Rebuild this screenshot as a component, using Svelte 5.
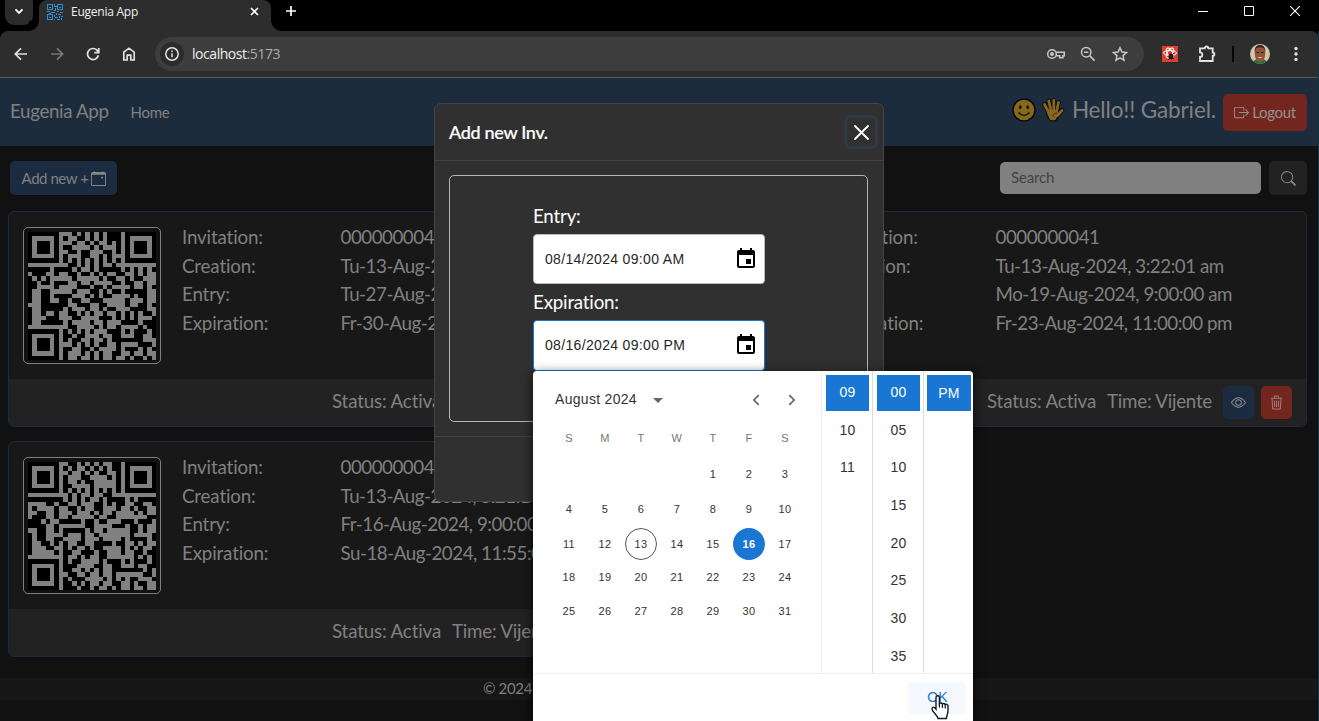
<script>
  const qrA = [
    '.......###.#.#.#.#...#.......', '.#####.#.##..#.#.#...#.#####.', '.#...#.###.##.#.##.#.#.#...#.', '.#...#.#..####.#.###.#.#...#.',
    '.#...#.##..#..###..#.#.#...#.', '.#####.#.###..##.#.###.#####.', '.......#.#.#.#.#.#.#.#.......', '#########..#.#.#.##.#########',
    '.....#....#.##.#.....#.#.#.#.', '#...##.##..#..#.#.##..##.#.##', '.#.#.#####.#####.#..##.#..###', '..#..#...##.##.####..#..##.##',
    '..####.####...#..#.####.##.#.', '.##..#####.###..#.#..#.....##', '.##..#....###.#.#..####.#..##', '.##..##..#..##...#####.###.##',
    '###......##...##..####.##..#.', '.##.....#.###.##.#..###....##', '.##.##.##..#.#.##.##.#.#.#..#', '.###...###..####...#.#.#.###.',
    '.##.....#.####.##.###....#...', '#########..####.#.##.####.#..', '.......#.#.#.#.###...#.#...#.', '.#####.#..#..###.##..###..##.',
    '.#...#.#.#..##.##.#.......###', '.#...#.###.#.#.#..##.####...#', '.#...#.#..##..#.####.#...#.#.', '.#####.#.###.#.#.##..##.##.##', '.......#.##.##.#.##.##.#..#.#'
  ];
  const qrB = [
    '.......##..#.#.#.##..#.......', '.#####.#.#.##.#.#.#..#.#####.', '.#...#.##.##.#.#..##.#.#...#.', '.#...#.#.###..####.#.#.#...#.',
    '.#...#.#.##.#..#####.#.#...#.', '.#####.#..####.#####.#.#####.', '.......#.#.#.#.#.#.#.#.......', '#########.#.##.##..##########',
    '........#.#.#.##.#....#.#....', '####..#..##.###..#.#..##..##.', '#.####.##..#.##..###.##.#..##', '##..##.###.###.#.##.####.#.##',
    '#...##.##.#####.##..#######..', '...#.##.....#..#..###...#...#', '....##.######..####...#..#.##', '##..##.#.....#.##.#####..#.##',
    '.#..####.###.##.#######.####.', '.#..##..####.###.####.#....#.', '.##..#.#.##..##....#..##.#.##', '.###..##.#.##.#..####.#.#.##.',
    '.#####.#..##...#..###.##..#..', '########.##.#.##..######.#.#.', '.......#.#..####.#...#.#...#.', '.#####.#...####..##..###.##..',
    '.#...#.#..##.#.#.##.......#.#', '.#...#.##..##.##.##.######..#', '.#...#.#.#...####.#.#.#..###.', '.#####.#..#.#.##.##..##.#..##', '.......#...#..#.##.#.##.##.##'
  ];
  const path = (rows) => rows.map((r, y) => [...r].map((c, x) => (c === '#' ? `M${x} ${y}h1v1h-1z` : '')).join('')).join('');
  const cards = [
    { qr: path(qrA), v: ['0000000042', 'Tu-13-Aug-2024, 3:22:40 am', 'Tu-27-Aug-2024, 9:00:00 am', 'Fr-30-Aug-2024, 11:00:00 pm'] },
    { qr: path(qrB), v: ['0000000041', 'Tu-13-Aug-2024, 3:22:01 am', 'Mo-19-Aug-2024, 9:00:00 am', 'Fr-23-Aug-2024, 11:00:00 pm'] },
    { qr: path(qrB), v: ['0000000040', 'Tu-13-Aug-2024, 3:21:10 am', 'Fr-16-Aug-2024, 9:00:00 am', 'Su-18-Aug-2024, 11:55:00 pm'] }
  ];
  const labels = ['Invitation:', 'Creation:', 'Entry:', 'Expiration:'];
  const weeks = [0, 1, 2, 3, 4].map((w) => [0, 1, 2, 3, 4, 5, 6].map((d) => w * 7 + d - 3));
  const hours = ['09', '10', '11'];
  const minutes = ['00', '05', '10', '15', '20', '25', '30', '35'];
</script>

{#snippet calIcon()}
  <svg class="cal" viewBox="0 0 24 24" width="24" height="24"><path d="M17 12h-5v5h5v-5zM16 1v2H8V1H6v2H5c-1.11 0-1.99.9-1.99 2L3 19c0 1.1.89 2 2 2h14c1.1 0 2-.9 2-2V5c0-1.1-.9-2-2-2h-1V1h-2zm3 18H5V8h14v11z" fill="#000" /></svg>
{/snippet}

<div class="page">
  <div class="tabs">
    <div class="chev"><svg width="10" height="7" viewBox="0 0 10 7"><path d="M1.5 1.3 5 4.8 8.5 1.3" fill="none" stroke="#fff" stroke-width="1.9" /></svg></div>
    <div class="tab">
      <svg width="16" height="16" viewBox="0 0 16 16" fill="none" stroke="#2f8fd6" shape-rendering="crispEdges"><path d="M.5.5h5v5h-5zM10.500.5h5v5h-5zM.5 10.500h5v5h-5z" /><path d="M2 3h2M12 3h2M2 13h2M7.500 0v3M8 2.500h2M8.500 4v3M0 7.500h3M4 8.500h4M2 9.500h2M10 7.500h2M13 8.500h3M9.500 9v2M11 10.500h3M7.500 11v2M8 13.500h3M12.500 12v2M14 12.500h2M10 15.500h3M14.500 14v2M7 15.500h1M7 6.500h1" /></svg>
      <span>Eugenia App</span>
      <svg class="tabx" width="9" height="9" viewBox="0 0 9 9"><path d="M1 1l7 7M8 1 1 8" stroke="#fff" stroke-width="1.6" /></svg>
    </div>
    <svg class="plus" width="12" height="12" viewBox="0 0 12 12"><path d="M6 1v10M1 6h10" stroke="#fff" stroke-width="1.7" /></svg>
    <div class="win">
      <svg width="10" height="10" viewBox="0 0 10 10"><path d="M0 5.5h10" stroke="#fff" /></svg>
      <svg width="10" height="10" viewBox="0 0 10 10"><path d="M.5.5h9v9h-9z" fill="none" stroke="#fff" /></svg>
      <svg width="10" height="10" viewBox="0 0 10 10"><path d="M0 0l10 10M10 0 0 10" stroke="#fff" stroke-width="1.1" /></svg>
    </div>
  </div>
  <div class="toolbar">
    <div class="nav">
      <svg width="16" height="16" viewBox="0 0 16 16"><path d="M14 8H2.5M8 2.3 2.3 8 8 13.7" /></svg>
      <svg class="dim" width="16" height="16" viewBox="0 0 16 16"><path d="M2 8h11.5M8 2.3 13.7 8 8 13.7" /></svg>
      <svg width="16" height="16" viewBox="0 0 16 16"><path d="M13.4 9.2A5.5 5.5 0 1 1 12 4.2L13.8 6M13.8 2v4.6H9.3" /></svg>
      <svg width="16" height="16" viewBox="0 0 16 16"><path d="M2.8 14V6.2L8 2.2l5.2 4V14H9.8V9.2H6.2V14z" /></svg>
    </div>
    <div class="url">
      <i><svg width="16" height="16" viewBox="0 0 16 16"><circle cx="8" cy="8" r="6.2" fill="none" stroke="#e3e3e3" stroke-width="1.5" /><path d="M8 7.2v4M8 4.4v1.6" stroke="#e3e3e3" stroke-width="1.5" /></svg></i>
      <span class="host">localhost<em>:5173</em></span>
      <div class="urlicons">
        <svg width="20" height="16" viewBox="0 0 20 16"><circle cx="6" cy="8" r="4.3" /><circle cx="6" cy="8" r="1.2" fill="#c7c7c7" /><path d="M10 6.3h8.3v3.5h-1.4v2h-3.2v-2H10" /></svg>
        <svg width="16" height="16" viewBox="0 0 16 16"><circle cx="6.200" cy="6.200" r="4.700" /><path d="M4 6.200h4.400M9.600 9.600l5 5" /></svg>
        <svg width="16" height="16" viewBox="0 0 16 16"><path d="M8 1.800l1.900 4.300 4.600.4-3.500 3.100 1 4.600L8 11.800l-4 2.400 1-4.600L1.500 6.500l4.600-.4z" /></svg>
      </div>
    </div>
    <svg class="ext" width="16" height="16" viewBox="0 0 16 16"><path d="M0 0h16v16H0z" fill="#d9402f" /><g fill="none" stroke="#fff" stroke-width="1"><ellipse cx="8" cy="7" rx="6.500" ry="2.600" /><ellipse cx="8" cy="7" rx="2.600" ry="5.500" transform="rotate(30 8 7)" /><ellipse cx="8" cy="7" rx="2.600" ry="5.500" transform="rotate(-30 8 7)" /></g><ellipse cx="9" cy="10.500" rx="2.600" ry="3" fill="#351412" /><path d="M6 14l6-7M7 8l5 5" stroke="#351412" /></svg>
    <svg class="puz" width="20" height="20" viewBox="0 0 20 20"><path d="M3 4.300H7.700a1.800 1.800 0 0 1 3.600 0H15.700V8.500a1.700 1.700 0 0 1 0 3.400V17H3V13a2.300 2.300 0 0 0 0-4.600z" fill="none" stroke="#e3e3e3" stroke-width="1.800" /></svg>
    <div class="bar"></div>
    <svg class="ava" width="20" height="20" viewBox="0 0 20 20"><defs><clipPath id="avatar"><circle cx="10" cy="10" r="10" /></clipPath></defs><g clip-path="url(#avatar)"><path d="M0 0h20v20H0z" fill="#d3c4ab" /><path d="M2 20c1-4 4-5 8-5s7 1 8 5z" fill="#17713c" /><ellipse cx="10" cy="10" rx="5.200" ry="8.500" fill="#93523a" /><path d="M4.800 9C4 3 7 1 10 1s6 2 5.200 8L14 4.500Q10 2 6 4.500z" fill="#31201a" /><path d="M6.500 8.500h2.500m2 0h2.500" stroke="#2b1813" stroke-width="1.200" /><path d="M7.500 13q2.500 2 5 0z" fill="#f4dcc8" /></g></svg>
    <svg class="dots" width="4" height="16" viewBox="0 0 4 16" fill="#e3e3e3"><circle cx="2" cy="2.500" r="1.700" /><circle cx="2" cy="8" r="1.700" /><circle cx="2" cy="13.500" r="1.700" /></svg>
  </div>

  <header>
    <span class="brand">Eugenia App</span><span class="home">Home</span>
    <div class="hello">
      <svg width="24" height="24" viewBox="0 0 24 24"><circle cx="12" cy="12" r="11" fill="#86671b" stroke="#080a0c" stroke-width="1.500" /><ellipse cx="8.200" cy="9.300" rx="1.300" ry="2" fill="#17130a" /><ellipse cx="15.800" cy="9.300" rx="1.300" ry="2" fill="#17130a" /><path d="M6.500 14.500q5.500 6 11 0" fill="none" stroke="#17130a" stroke-width="1.500" /></svg>
      <svg width="24" height="24" viewBox="0 0 24 24"><g fill="none" stroke-linecap="round" stroke-linejoin="round"><path d="M3.500 6.500 7.500 14M7.800 3l2 9M12.800 2.500v9.500M17.500 4.500l-1.800 9M21 12.500l-4.500 5" stroke="#080a0c" stroke-width="4.600" /><path d="M7.300 13h8.500l.9 3.500-3 4.700h-3.600L7.300 16z" fill="#86671b" stroke="#080a0c" stroke-width="4.600" /><path d="M7.300 13h8.500l.9 3.500-3 4.700h-3.600L7.300 16z" fill="#86671b" stroke="#86671b" stroke-width="2" /><path d="M3.500 6.500 7.500 14M7.800 3l2 9M12.800 2.500v9.500M17.500 4.500l-1.800 9M21 12.500l-4.500 5" stroke="#86671b" stroke-width="2.800" /><path d="M12 18.500q0-3.500 4-3.500" stroke="#3d3012" /></g></svg>
      <span>Hello!! Gabriel.</span>
    </div>
    <button class="logout"><svg width="15" height="15" viewBox="0 0 16 16" fill="#929292"><path fill-rule="evenodd" d="M10 12.500a.5.5 0 0 1-.5.5h-8a.5.5 0 0 1-.5-.5v-9a.5.5 0 0 1 .5-.5h8a.5.5 0 0 1 .5.5v2a.5.5 0 0 0 1 0v-2A1.500 1.500 0 0 0 9.500 2h-8A1.500 1.500 0 0 0 0 3.500v9A1.500 1.500 0 0 0 1.500 14h8a1.500 1.500 0 0 0 1.500-1.500v-2a.5.5 0 0 0-1 0z" /><path d="M15.854 8.354a.5.5 0 0 0 0-.708l-3-3a.5.5 0 0 0-.708.708L14.293 7.500H5.500a.5.5 0 0 0 0 1h8.793l-2.147 2.146a.5.5 0 0 0 .708.708z" /></svg><span>Logout</span></button>
  </header>

  <div class="actions">
    <button class="add"><span>Add new +</span><svg width="15" height="15" viewBox="0 0 16 16" fill="#858789"><path d="M11 6.500a.5.5 0 0 1 .5-.5h1a.5.5 0 0 1 .5.5v1a.5.5 0 0 1-.5.5h-1a.5.5 0 0 1-.5-.5z" /><path d="M3.500 0a.5.5 0 0 1 .5.5V1h8V.5a.5.5 0 0 1 1 0V1h1a2 2 0 0 1 2 2v11a2 2 0 0 1-2 2H2a2 2 0 0 1-2-2V3a2 2 0 0 1 2-2h1V.5a.5.5 0 0 1 .5-.5M1 4v10a1 1 0 0 0 1 1h12a1 1 0 0 0 1-1V4z" /></svg></button>
    <div class="search">Search</div>
    <button class="find"><svg width="15" height="15" viewBox="0 0 16 16" fill="#858585"><path d="M11.742 10.344a6.500 6.500 0 1 0-1.397 1.398l3.850 3.850a1 1 0 0 0 1.415-1.414zM12 6.500a5.500 5.500 0 1 1-11 0 5.500 5.500 0 0 1 11 0" /></svg></button>
  </div>

  <main>
    {#each cards as c}
      <article>
        <div class="body">
          <div class="qr"><svg width="128" height="128" viewBox="0 0 29 29"><path d="M0 0h29v29H0z" fill="#000" /><path d={c.qr} fill="#808080" shape-rendering="crispEdges" /></svg></div>
          <dl>{#each labels as l, i}<dt>{l}</dt><dd>{c.v[i]}</dd>{/each}</dl>
        </div>
        <div class="foot">
          <span>Status: Activa</span><span class="time">Time: Vijente</span>
          <button class="eye"><svg width="15" height="15" viewBox="0 0 16 16" fill="#8b8e91"><path d="M16 8s-3-5.500-8-5.500S0 8 0 8s3 5.500 8 5.500S16 8 16 8M1.173 8a13 13 0 0 1 1.660-2.043C4.120 4.668 5.880 3.500 8 3.500s3.879 1.168 5.168 2.457A13 13 0 0 1 14.828 8q-.086.130-.195.288c-.335.480-.830 1.120-1.465 1.755C11.879 11.332 10.119 12.500 8 12.500s-3.879-1.168-5.168-2.457A13 13 0 0 1 1.172 8z" /><path d="M8 5.500a2.500 2.500 0 1 0 0 5 2.500 2.500 0 0 0 0-5M4.500 8a3.500 3.500 0 1 1 7 0 3.500 3.500 0 0 1-7 0" /></svg></button>
          <button class="trash"><svg width="15" height="15" viewBox="0 0 16 16" fill="none" stroke="#a7827f"><path d="M2 3.500h12M6 3V1h4v2M3.200 4l.8 11h8l.8-11M5.700 6l.3 7M8 6v7M10.300 6l-.3 7" /></svg></button>
        </div>
      </article>
    {/each}
  </main>
  <footer>© 2024</footer>
  <div class="edge"></div>

  <section class="modal">
    <div class="mhead"><h5>Add new Inv.</h5><div class="close"><svg width="15" height="15" viewBox="0 0 15 15"><path d="M1 1l13 13M14 1 1 14" stroke="#fff" stroke-width="1.800" stroke-linecap="round" /></svg></div></div>
    <div class="mbody">
      <div class="field">
        <p>Entry:</p>
        <div class="input">08/14/2024 09:00 AM{@render calIcon()}</div>
        <p class="second">Expiration:</p>
        <div class="input focus">08/16/2024 09:00 PM{@render calIcon()}</div>
      </div>
    </div>
    <div class="mfoot"></div>
  </section>

  <section class="picker">
    <div class="top">
      <div class="calendar">
        <div class="month"><span>August 2024</span><svg width="10" height="5" viewBox="0 0 10 5"><path d="M0 0h10L5 5z" fill="#666" /></svg>
          <div class="arrows"><svg width="8" height="12" viewBox="0 0 8 12"><path d="M6.700 1.200 1.900 6l4.800 4.800" /></svg><svg width="8" height="12" viewBox="0 0 8 12"><path d="M1.300 1.200 6.100 6l-4.800 4.800" /></svg></div>
        </div>
        <div class="week names">{#each ['S', 'M', 'T', 'W', 'T', 'F', 'S'] as n}<span>{n}</span>{/each}</div>
        <div class="days">
          {#each weeks as w}<div class="week">{#each w as d}<span class:today={d === 13} class:sel={d === 16}>{d > 0 ? d : ''}</span>{/each}</div>{/each}
        </div>
      </div>
      <div class="col">{#each hours as h, i}<span class:on={i === 0}>{h}</span>{/each}</div>
      <div class="col line">{#each minutes as m, i}<span class:on={i === 0}>{m}</span>{/each}</div>
      <div class="col line"><span class="on pm">PM</span></div>
    </div>
    <div class="ok"><button>OK</button></div>
  </section>
  <svg class="cursor" width="19" height="25" viewBox="0 0 19 25"><path d="M5 14V2.500a1.700 1.700 0 0 1 3.400 0V8.500q1.600-1.300 3 .3 1.700-1 2.800.7 2-.8 2.800 1.200V16c0 3-1.500 4-1.500 7.500H7C6.500 20 1 16.500 1 14s2-2.500 4 0z" fill="#fff" stroke="#15182a" stroke-width="1.400" /><path d="M8.400 8.500v4M11.400 9v4M14.200 10v3.500" stroke="#15182a" stroke-width="1.200" /></svg>
</div>

<style>
  :global(body) { margin: 0; background: #111; }
  * { box-sizing: border-box; }
  svg { display: block; flex: none; }
  button { border: 0; padding: 0; font: inherit; color: inherit; display: flex; align-items: center; justify-content: center; border-radius: 5px; }
  .page { position: relative; width: 1319px; height: 721px; overflow: hidden; background: #111; font-family: Lato, sans-serif; color: #808080; }
  .tabs { height: 31px; background: #000; display: flex; padding-left: 5px; align-items: flex-start; }
  .chev { width: 28px; height: 25px; border-radius: 0 0 9px 9px; background: #2b2b2b; display: flex; align-items: center; justify-content: center; padding-bottom: 3px; }
  .tab { position: relative; margin-left: 6px; width: 232px; height: 31px; background: #2d2d2d; border-radius: 8px 8px 0 0; display: flex; align-items: center; padding: 0 12px 8px 8px; color: #f1f1f1; font: 12px "Open Sans", sans-serif; letter-spacing: -.25px; }
  .tab::before, .tab::after { content: ''; position: absolute; bottom: 0; width: 10px; height: 10px; }
  .tab::before { left: -10px; background: radial-gradient(circle at 0 0, #000 9.5px, #2d2d2d 10px); }
  .tab::after { right: -10px; background: radial-gradient(circle at 100% 0, #000 9.5px, #2d2d2d 10px); }
  .tab span { margin-left: 8px; }
  .tabx { margin-left: auto; }
  .plus { margin: 5px 0 0 14px; }
  .win { margin: 6px 19px 0 auto; display: flex; gap: 36px; }
  .toolbar { height: 47px; background: #2d2d2d; border-bottom: 1px solid #56595c; border-radius: 8px 8px 0 0; display: flex; align-items: center; box-shadow: 0 -8px 0 0 #000; padding-left: 13px; position: relative; clip-path: inset(0); }
  .nav { display: flex; gap: 20px; }
  .nav svg { fill: none; stroke: #e1e1e1; stroke-width: 1.7; }
  .nav .dim { stroke: #777; }
  .url { margin-left: 18px; width: 989px; height: 34px; border-radius: 17px; background: #3d3d3d; display: flex; align-items: center; padding-left: 5px; }
  .url i { width: 24px; height: 24px; border-radius: 50%; background: #2b2b2b; display: flex; align-items: center; justify-content: center; }
  .host { margin-left: 8px; font: 14px "Open Sans", sans-serif; color: #eee; letter-spacing: -.45px; padding-bottom: 1px; }
  .host em { font-style: normal; color: #aaa; }
  .urlicons { display: flex; gap: 16px; margin-left: auto; padding-right: 16px; }
  .urlicons svg { fill: none; stroke: #c7c7c7; stroke-width: 1.5; }
  .urlicons svg:first-child { margin-right: -2px; }
  .ext { margin-left: 18px; }
  .puz { margin-left: 19px; }
  .bar { width: 2px; height: 16px; background: #050505; margin-left: 15px; }
  .ava { margin-left: 16px; }
  .dots { margin-left: 24px; }
  header { height: 68px; background: #1d2c3d; display: flex; align-items: center; padding: 0 12px 0 10px; }
  .brand { font-size: 18.75px; padding-bottom: 3px; letter-spacing: -.36px; }
  .home { font-size: 15px; margin-left: 22px; letter-spacing: -.3px; padding-bottom: 1px; }
  .hello { margin-left: auto; display: flex; align-items: center; gap: 5px; font-size: 22.5px; padding-bottom: 5px; letter-spacing: -.13px; }
  .hello span { margin-left: 2px; }
  .logout { width: 84px; height: 37px; background: #73261e; margin-left: 7px; font-size: 15px; gap: 3px; color: #929292; letter-spacing: -.3px; }
  .logout span { padding-bottom: 1px; }
  .actions { display: flex; align-items: center; padding: 15px 12px 0 10px; height: 49px; font-size: 15px; }
  .add { width: 107px; height: 34px; background: #1b2c40; gap: 3px; font-size: 15px; letter-spacing: -.45px; padding-left: 1px; }
  .add span { padding-bottom: 1px; }
  .search { width: 261px; height: 32px; background: #808080; color: #444; border-radius: 5px; margin: 0 8px 0 auto; padding: 6px 11px; line-height: 18px; letter-spacing: -.15px; }
  .find { width: 38px; height: 34px; background: #222; }
  main { display: grid; grid-template-columns: 644px 644px; column-gap: 11px; row-gap: 14px; padding: 16px 8px 0; }
  article { height: 216px; background: #181818; border: 1px solid #1b2b3e; border-radius: 6px; overflow: hidden; font-size: 18.75px; }
  .body { height: 167px; display: flex; padding: 15px 0 0 14px; }
  .qr { width: 138px; height: 137px; border: 1px solid #808080; border-radius: 5px; padding: 4px; background: #111; }
  dl { margin: -4px 0 0 21px; display: grid; grid-template-columns: 158.5px 290px; grid-template-rows: repeat(4, 28.7px); line-height: 28px; white-space: nowrap; }
  dt { letter-spacing: -.15px; }
  dd { margin: 0; letter-spacing: -.48px; }
  .foot { height: 48px; background: #222; display: flex; align-items: center; justify-content: flex-end; padding-right: 14px; }
  .foot span { padding-bottom: 5px; letter-spacing: -.15px; }
  .foot .time { margin-left: 11px; letter-spacing: -.25px; }
  .foot button { width: 31px; height: 33px; margin-bottom: 2px; }
  .foot .eye { margin-left: 11px; background: #1b2c40; }
  .foot .trash { margin-left: 7px; background: #73261e; }
  footer { margin-top: 21px; height: 22px; background: #171717; padding-left: 483px; font-size: 15px; line-height: 21px; letter-spacing: -.35px; }
  .edge { position: absolute; right: 0; top: 31px; width: 1px; height: 690px; background: #12343d; }
  .modal { position: absolute; left: 434px; top: 103px; width: 450px; height: 399px; background: #303030; border: 1px solid #444; border-radius: 7px; color: #fff; }
  .mhead { height: 57px; border-bottom: 1px solid #444; display: flex; align-items: center; justify-content: space-between; padding: 0 5px 0 14px; }
  h5 { margin: 0 0 1px; font-size: 18px; font-weight: 500; letter-spacing: -.32px; -webkit-text-stroke: .2px #fff; }
  .close { width: 34px; height: 34px; border-radius: 7px; box-shadow: inset 0 0 0 3px #2e3945; display: flex; align-items: center; justify-content: center; }
  .mbody { height: 275px; padding: 14px 15px 14px 14px; }
  .field { height: 247px; border: 1px solid #adb5bd; border-radius: 5px; padding: 27px 0 0 83px; }
  .field p { margin: 0; font-size: 18.75px; line-height: 25px; height: 31px; letter-spacing: -.2px; }
  .field .second { height: 36px; padding-top: 5px; }
  .input { width: 232px; height: 50px; background: #fff; border: 1px solid #bbb; border-radius: 4px; color: #262626; font: 14px "Liberation Sans", sans-serif; letter-spacing: .33px; padding: 0 6px 0 11px; display: flex; align-items: center; justify-content: space-between; }
  .input.focus { border: 1px solid #1976d2; height: 51px; padding-bottom: 1px; }
  .mfoot { border-top: 1px solid #444; }
  .picker { position: absolute; left: 533px; top: 371px; width: 440px; height: 350px; background: #fff; border-radius: 4px 4px 0 0; box-shadow: 0 3px 12px rgba(0,0,0,.75); color: #333; font-family: "Liberation Sans", sans-serif; }
  .top { height: 303px; display: flex; border-bottom: 1px solid #eee; }
  .calendar { width: 289px; flex: none; border-right: 1px solid #eee; padding-left: 18px; }
  .month { height: 56px; padding-left: 4px; display: flex; align-items: center; font-size: 14px; letter-spacing: .3px; }
  .month > svg { margin: 2px 0 0 16px; }
  .arrows { display: flex; gap: 28px; margin: 2px 25px 0 auto; }
  .arrows path { fill: none; stroke: #666; stroke-width: 1.7; }
  .week { display: flex; height: 34.2px; font-size: 11px; letter-spacing: .4px; }
  .week span { width: 32px; height: 32px; margin: 0 2px; display: flex; align-items: center; justify-content: center; border-radius: 50%; }
  .week.names { height: 33px; margin-top: -5px; color: #777; }
  .days { padding-top: 3px; }
  .days .week:nth-child(1) { height: 35px; }
  .days .week:nth-child(2) { height: 35px; }
  .days .week:nth-child(3) { height: 33px; }
  .week .today { border: 1px solid #555; }
  .week .sel { background: #1976d2; color: #fff; font-weight: 700; }
  .col { width: 51px; flex: none; height: 302px; overflow: hidden; padding: 4px 0 0 4px; font-size: 14px; letter-spacing: .25px; }
  .line { border-left: 1px solid #ddd; }
  .top .col:nth-child(2) { margin-left: 0; width: 50px; }
  .top .line { padding-left: 4px; }
  .col span { display: flex; width: 43px; height: 36px; margin-bottom: 1.7px; align-items: center; justify-content: center; padding-bottom: 2px; }
  .col .on { background: #1976d2; color: #fff; }
  .col .pm { width: 44px; margin-left: -1px; padding: 0; }
  .ok { display: flex; justify-content: flex-end; padding: 8px 7px 0; }
  .ok button { width: 58px; height: 32px; background: #f5f9fd; color: #1976d2; font-size: 14px; border-radius: 4px; letter-spacing: .1px; padding: 0 0 2px 1px; }
  .cursor { position: absolute; left: 931px; top: 695px; }
</style>
